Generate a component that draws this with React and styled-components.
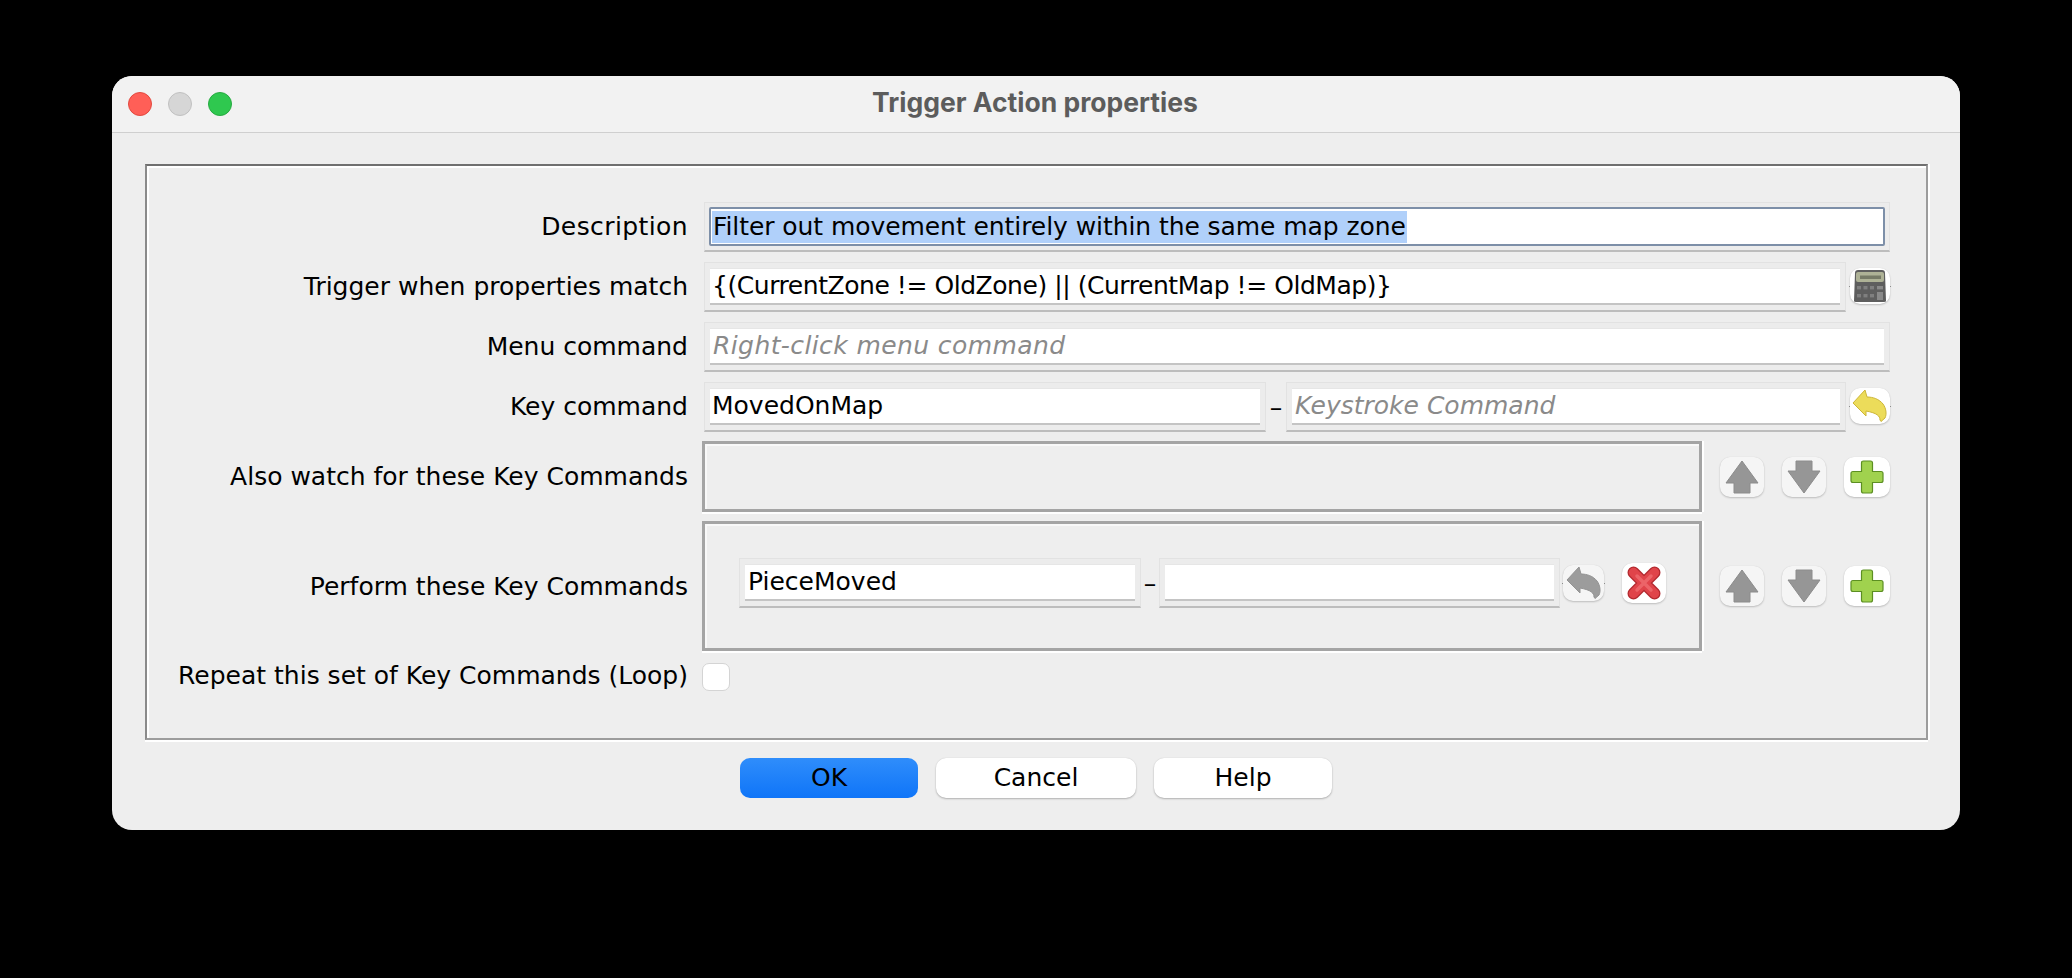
import React from "react";
import styled, { createGlobalStyle } from "styled-components";

const Global = createGlobalStyle`
  html, body { margin: 0; background: #000; }
  * { box-sizing: border-box; }
`;
const FONT = `"DejaVu Sans", "Liberation Sans", sans-serif`;

const Page = styled.div`
  width: 2072px; height: 978px; background: #000; padding: 76px 112px 0;
  font-family: ${FONT}; font-size: 25px; color: #000;
`;
const Win = styled.div`
  width: 1848px; height: 754px; background: #eeeeee; border-radius: 20px; overflow: hidden;
  display: flex; flex-direction: column;
`;
const TitleBar = styled.div`
  position: relative; height: 57px; background: #f2f2f2; border-bottom: 1px solid #cfcfcf;
  display: flex; align-items: center; justify-content: center; flex: none; padding: 0 2px 5px 0;
`;
const Lights = styled.div`
  position: absolute; left: 16px; top: 16px; display: flex; gap: 16px;
`;
const Light = styled.span`
  width: 24px; height: 24px; border-radius: 50%; background: ${p => p.$c}; border: 1px solid ${p => p.$b};
`;
const Title = styled.div`
  font-family: Inter, "Liberation Sans", sans-serif; font-weight: 700; font-size: 26.5px; color: #5c5c5c;
`;
const Body = styled.div`
  flex: 1; padding: 31px 32px 0 33px; display: flex; flex-direction: column;
`;
const Panel = styled.div`
  height: 576px; border: 2px solid #9c9c9c; border-top-color: #6f6f6f; border-left-color: #8a8a8a;
  box-shadow: inset 2px 2px 0 #fff, 0 2px 0 #fff, 2px 0 0 #fff;
  padding: 36px 36px 0 3px; display: flex; flex-direction: column;
`;
const Row = styled.div`
  display: flex; align-items: center; margin-top: ${p => p.$top || 0}px;
`;
const Label = styled.label`
  width: 538px; flex: none; text-align: right; white-space: nowrap; margin-right: 16px; padding-bottom: ${p => p.$pb ?? 2}px;
  letter-spacing: ${p => p.$ls || 0}px;
`;
const Content = styled.div`
  flex: 1; min-width: 0; display: flex; align-items: center;
`;
const FieldOuter = styled.div`
  flex: ${p => p.$w ? "none" : 1}; width: ${p => p.$w ? p.$w + "px" : "auto"}; height: 50px; padding: 5px;
  background: #ececec; border: 1px solid #e2e2e2; border-bottom: 2px solid #bdbdbd; min-width: 0;
`;
const FieldInner = styled.div`
  height: 37px; background: #fff; border-top: 1px solid #e6e6e6; border-bottom: 2px solid #c4c4c4;
  padding: 0 0 1px ${p => p.$pad || 2}px; display: flex; align-items: center; white-space: nowrap; overflow: hidden;
  letter-spacing: ${p => p.$ls || 0}px;
  ${p => p.$focus && `border: 2px solid #7d8fa8; border-radius: 2px; padding: 0 0 0 1px; height: 39px; margin: -1px -1px 0;`}
  ${p => p.$ph && `color: #8a8a8a; font-style: italic; padding-left: 3px;`}
`;
const Selected = styled.span`
  background: #b0d0fa; display: inline-flex; align-items: center; height: 32px; padding: 0 1px 1px;
  letter-spacing: -0.07px;
`;
const Dash = styled.span`
  width: ${p => p.$w || 18}px; flex: none; text-align: center; position: relative; top: 0;
`;
const IconBtn = styled.button`
  position: relative; flex: none; padding: 0; width: ${p => p.$w || 40}px; height: ${p => p.$h || 36}px;
  margin-left: ${p => p.$ml || 0}px; margin-bottom: ${p => p.$mb || 0}px; border: 0; border-radius: 10px;
  background: ${p => p.$dim ? "#f5f5f5" : "#ffffff"};
  box-shadow: 0 1px 2px rgba(0,0,0,.2), 0 0 1px rgba(0,0,0,.1);
  display: flex; align-items: center; justify-content: center;
  ${p => p.$ticks && `
    &::before, &::after { content: ""; position: absolute; top: 50%; width: 1px; height: 1px; background: #8c8c8c; }
    &::before { left: -1px; }
    &::after { right: -1px; }
  `}
`;
const Box = styled.div`
  flex: none; width: 1000px; margin-left: -2px; height: ${p => p.$h}px; border: 3px solid #a4a4a4;
  box-shadow: inset 2px 2px 0 #f8f8f8, 0 2px 0 #fff, 2px 0 0 #fff;
  display: flex; align-items: center; padding: 0 0 6px 34px;
`;
const SideButtons = styled.div`
  display: flex; gap: 18px; margin-left: 18px; flex: none;
`;
const CheckBox = styled.span`
  width: 28px; height: 28px; margin-left: -2px; background: #fff; border: 1px solid #d4d4d4; border-radius: 7px; flex: none;
`;
const Buttons = styled.div`
  display: flex; justify-content: flex-start; padding: 18px 0 0 595px;
`;
const Btn = styled.button`
  width: ${p => p.$w}px; height: 40px; margin-right: ${p => p.$mr || 0}px; border: 0; border-radius: 10px;
  font: inherit; color: #000; padding: 0 0 2px;
  background: ${p => p.$primary ? "linear-gradient(#2f8dfb, #0f75f8)" : "#fff"};
  box-shadow: ${p => p.$primary ? "none" : "0 1px 2px rgba(0,0,0,.25), 0 0 1px rgba(0,0,0,.15)"};
`;

const Calculator = () => (
  <svg width="40" height="36" viewBox="0 0 40 36">
    <path d="M5 5 Q5 2 8 2 L32 2 Q35 2 35 5 L36 33 Q36 34 34 34 L6 34 Q4 34 4 33 Z" fill="#5e5e5e" />
    <rect x="6" y="4" width="28" height="10" rx="2" fill="#aeb296" />
    <rect x="10" y="7.5" width="21" height="3.5" fill="#767a66" />
    {[0, 1, 2].map(i => <rect key={i} x={7 + i * 6.5} y="18" width="4" height="3.4" fill="#7f7f7f" />)}
    {[0, 1, 2].map(i => <rect key={i} x={7 + i * 6.5} y="26" width="4" height="3.4" fill="#7f7f7f" />)}
    <rect x="27" y="18" width="6" height="3.4" fill="#8a8a8a" />
    <rect x="27" y="24" width="6" height="8" fill="#8a8a8a" />
  </svg>
);
const Undo = ({ gray }) => (
  <svg width="40" height="36" viewBox="0 0 40 36">
    <path d="M3 15 L15 2 L17 9 C23 9 29 11 33 16 C36 20 37 26 35 30 L31 33.5 L30 32 C30 28 27 25 16 23 L16 28 Z"
      fill={gray ? "#9c9c9c" : "#ecdc5a"} stroke={gray ? "#939393" : "#cdb638"} strokeWidth="1" strokeLinejoin="round" />
  </svg>
);
const Cross = () => (
  <svg width="36" height="36" viewBox="0 0 36 36">
    <path d="M7.5 7.5 L28.5 28.5 M28.5 7.5 L7.5 28.5" stroke="#b32a30" strokeWidth="12" strokeLinecap="round" fill="none" />
    <path d="M7.5 7.5 L28.5 28.5 M28.5 7.5 L7.5 28.5" stroke="#e0444a" strokeWidth="9.5" strokeLinecap="round" fill="none" />
    <path d="M11 11 L25 25 M25 11 L11 25" stroke="#ec6468" strokeWidth="3.5" strokeLinecap="round" fill="none" />
  </svg>
);
const Arrow = ({ down }) => (
  <svg width="34" height="34" viewBox="0 0 34 34" style={down ? { transform: "rotate(180deg)" } : undefined}>
    <path d="M17 1 L33 23 L25 23 L25 33 L9 33 L9 23 L1 23 Z" fill="#969696" stroke="#8c8c8c" strokeWidth="1" />
  </svg>
);
const Plus = () => (
  <svg width="34" height="34" viewBox="0 0 34 34">
    <path d="M11.5 3 Q11.5 1 13.5 1 L20.5 1 Q22.5 1 22.5 3 L22.5 11.5 L31 11.5 Q33 11.5 33 13.5 L33 20.5 Q33 22.5 31 22.5 L22.5 22.5 L22.5 31 Q22.5 33 20.5 33 L13.5 33 Q11.5 33 11.5 31 L11.5 22.5 L3 22.5 Q1 22.5 1 20.5 L1 13.5 Q1 11.5 3 11.5 L11.5 11.5 Z"
      fill="#a0d24e" stroke="#5c8f22" strokeWidth="1.2" />
  </svg>
);
const Side = () => (
  <SideButtons>
    <IconBtn $w={44} $h={40} $dim><Arrow /></IconBtn>
    <IconBtn $w={44} $h={40} $dim><Arrow down /></IconBtn>
    <IconBtn $w={46} $h={40}><Plus /></IconBtn>
  </SideButtons>
);

export default function App() {
  return (
    <Page>
      <Global />
      <Win>
        <TitleBar>
          <Lights>
            <Light $c="#ff5f57" $b="#e2493f" />
            <Light $c="#d6d6d6" $b="#c0c0c0" />
            <Light $c="#2fc84f" $b="#27aa41" />
          </Lights>
          <Title>Trigger Action properties</Title>
        </TitleBar>
        <Body>
          <Panel>
            <Row>
              <Label $ls={0.4}>Description</Label>
              <Content>
                <FieldOuter><FieldInner $focus><Selected>Filter out movement entirely within the same map zone</Selected></FieldInner></FieldOuter>
              </Content>
            </Row>
            <Row $top={10}>
              <Label>Trigger when properties match</Label>
              <Content>
                <FieldOuter><FieldInner $ls={-0.45}>{"{(CurrentZone != OldZone) || (CurrentMap != OldMap)}"}</FieldInner></FieldOuter>
                <IconBtn $ml={4} $mb={2} $ticks><Calculator /></IconBtn>
              </Content>
            </Row>
            <Row $top={10}>
              <Label>Menu command</Label>
              <Content>
                <FieldOuter><FieldInner $ph $ls={0.4}>Right-click menu command</FieldInner></FieldOuter>
              </Content>
            </Row>
            <Row $top={10}>
              <Label>Key command</Label>
              <Content>
                <FieldOuter $w={562}><FieldInner>MovedOnMap</FieldInner></FieldOuter>
                <Dash $w={20}>–</Dash>
                <FieldOuter><FieldInner $ph>Keystroke Command</FieldInner></FieldOuter>
                <IconBtn $ml={4} $mb={2} $ticks><Undo /></IconBtn>
              </Content>
            </Row>
            <Row $top={9}>
              <Label $pb={0}>Also watch for these Key Commands</Label>
              <Content>
                <Box $h={71} />
                <Side />
              </Content>
            </Row>
            <Row $top={9}>
              <Label $pb={0}>Perform these Key Commands</Label>
              <Content>
                <Box $h={130}>
                  <FieldOuter $w={402}><FieldInner $pad={3}>PieceMoved</FieldInner></FieldOuter>
                  <Dash>–</Dash>
                  <FieldOuter $w={401}><FieldInner /></FieldOuter>
                  <IconBtn $ml={3} $dim $w={41} $ticks><Undo gray /></IconBtn>
                  <IconBtn $ml={18} $w={44} $h={40}><Cross /></IconBtn>
                </Box>
                <Side />
              </Content>
            </Row>
            <Row $top={10}>
              <Label>Repeat this set of Key Commands (Loop)</Label>
              <Content><CheckBox /></Content>
            </Row>
          </Panel>
          <Buttons>
            <Btn $primary $w={178} $mr={18}>OK</Btn>
            <Btn $w={200} $mr={18}>Cancel</Btn>
            <Btn $w={178}>Help</Btn>
          </Buttons>
        </Body>
      </Win>
    </Page>
  );
}
